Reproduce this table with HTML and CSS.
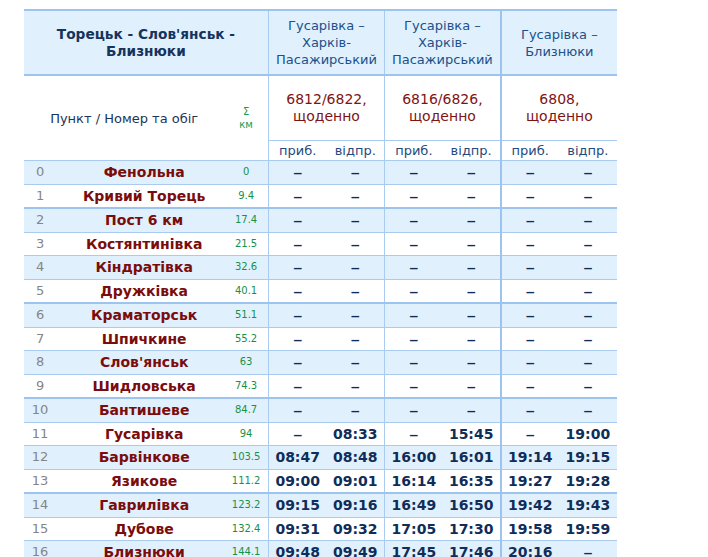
FILE: index.html
```html
<!DOCTYPE html>
<html lang="uk">
<head>
<meta charset="utf-8">
<title>Торецьк - Слов'янськ - Близнюки</title>
<link rel="stylesheet" href="styles.css">
</head>
<body>
<div class="page">
<table class="schedule">
<colgroup>
<col class="c-num"><col class="c-name"><col class="c-km">
<col class="c-t"><col class="c-t"><col class="c-t"><col class="c-t"><col class="c-t"><col class="c-t">
</colgroup>
<thead>
<tr class="h-route">
<th colspan="3" class="route-title">Торецьк - Слов'янськ -<br>Близнюки</th>
<th colspan="2" class="train-route gl">Гусарівка –<br>Харків-<br>Пасажирський</th>
<th colspan="2" class="train-route gl">Гусарівка –<br>Харків-<br>Пасажирський</th>
<th colspan="2" class="train-route gl2">Гусарівка –<br>Близнюки</th>
</tr>
<tr class="h-num">
<th colspan="2" rowspan="2" class="point">Пункт / Номер та обіг</th>
<th rowspan="2" class="sum-km">Σ<br>км</th>
<th colspan="2" class="train-num gl">6812/6822,<br>щоденно</th>
<th colspan="2" class="train-num gl">6816/6826,<br>щоденно</th>
<th colspan="2" class="train-num gl2">6808,<br>щоденно</th>
</tr>
<tr class="h-arr">
<th class="gl">приб.</th><th>відпр.</th>
<th class="gl">приб.</th><th>відпр.</th>
<th class="gl2">приб.</th><th>відпр.</th>
</tr>
</thead>
<tbody>
<tr class="even"><td class="num">0</td><td class="st">Фенольна</td><td class="km">0</td><td class="gl d">–</td><td class="d">–</td><td class="gl d">–</td><td class="d">–</td><td class="gl2 d">–</td><td class="d">–</td></tr>
<tr class="odd grp"><td class="num">1</td><td class="st">Кривий Торець</td><td class="km">9.4</td><td class="gl d">–</td><td class="d">–</td><td class="gl d">–</td><td class="d">–</td><td class="gl2 d">–</td><td class="d">–</td></tr>
<tr class="even"><td class="num">2</td><td class="st">Пост 6 км</td><td class="km">17.4</td><td class="gl d">–</td><td class="d">–</td><td class="gl d">–</td><td class="d">–</td><td class="gl2 d">–</td><td class="d">–</td></tr>
<tr class="odd"><td class="num">3</td><td class="st">Костянтинівка</td><td class="km">21.5</td><td class="gl d">–</td><td class="d">–</td><td class="gl d">–</td><td class="d">–</td><td class="gl2 d">–</td><td class="d">–</td></tr>
<tr class="even"><td class="num">4</td><td class="st">Кіндратівка</td><td class="km">32.6</td><td class="gl d">–</td><td class="d">–</td><td class="gl d">–</td><td class="d">–</td><td class="gl2 d">–</td><td class="d">–</td></tr>
<tr class="odd grp"><td class="num">5</td><td class="st">Дружківка</td><td class="km">40.1</td><td class="gl d">–</td><td class="d">–</td><td class="gl d">–</td><td class="d">–</td><td class="gl2 d">–</td><td class="d">–</td></tr>
<tr class="even"><td class="num">6</td><td class="st">Краматорськ</td><td class="km">51.1</td><td class="gl d">–</td><td class="d">–</td><td class="gl d">–</td><td class="d">–</td><td class="gl2 d">–</td><td class="d">–</td></tr>
<tr class="odd"><td class="num">7</td><td class="st">Шпичкине</td><td class="km">55.2</td><td class="gl d">–</td><td class="d">–</td><td class="gl d">–</td><td class="d">–</td><td class="gl2 d">–</td><td class="d">–</td></tr>
<tr class="even"><td class="num">8</td><td class="st">Слов'янськ</td><td class="km">63</td><td class="gl d">–</td><td class="d">–</td><td class="gl d">–</td><td class="d">–</td><td class="gl2 d">–</td><td class="d">–</td></tr>
<tr class="odd grp"><td class="num">9</td><td class="st">Шидловська</td><td class="km">74.3</td><td class="gl d">–</td><td class="d">–</td><td class="gl d">–</td><td class="d">–</td><td class="gl2 d">–</td><td class="d">–</td></tr>
<tr class="even"><td class="num">10</td><td class="st">Бантишеве</td><td class="km">84.7</td><td class="gl d">–</td><td class="d">–</td><td class="gl d">–</td><td class="d">–</td><td class="gl2 d">–</td><td class="d">–</td></tr>
<tr class="odd"><td class="num">11</td><td class="st">Гусарівка</td><td class="km">94</td><td class="gl d">–</td><td class="t">08:33</td><td class="gl d">–</td><td class="t">15:45</td><td class="gl2 d">–</td><td class="t">19:00</td></tr>
<tr class="even"><td class="num">12</td><td class="st">Барвінкове</td><td class="km">103.5</td><td class="gl t">08:47</td><td class="t">08:48</td><td class="gl t">16:00</td><td class="t">16:01</td><td class="gl2 t">19:14</td><td class="t">19:15</td></tr>
<tr class="odd grp"><td class="num">13</td><td class="st">Язикове</td><td class="km">111.2</td><td class="gl t">09:00</td><td class="t">09:01</td><td class="gl t">16:14</td><td class="t">16:35</td><td class="gl2 t">19:27</td><td class="t">19:28</td></tr>
<tr class="even"><td class="num">14</td><td class="st">Гаврилівка</td><td class="km">123.2</td><td class="gl t">09:15</td><td class="t">09:16</td><td class="gl t">16:49</td><td class="t">16:50</td><td class="gl2 t">19:42</td><td class="t">19:43</td></tr>
<tr class="odd"><td class="num">15</td><td class="st">Дубове</td><td class="km">132.4</td><td class="gl t">09:31</td><td class="t">09:32</td><td class="gl t">17:05</td><td class="t">17:30</td><td class="gl2 t">19:58</td><td class="t">19:59</td></tr>
<tr class="even"><td class="num">16</td><td class="st">Близнюки</td><td class="km">144.1</td><td class="gl t">09:48</td><td class="t">09:49</td><td class="gl t">17:45</td><td class="t">17:46</td><td class="gl2 t">20:16</td><td class="d">–</td></tr>
</tbody>
</table>
</div>
</body>
</html>
```

FILE: styles.css
```css
html, body {
  margin: 0;
  padding: 0;
  background: #ffffff;
}

.page {
  padding: 9px 0 0 24px;
  font-family: "DejaVu Sans", Verdana, sans-serif;
  font-size: 13px;
}

.schedule {
  border-collapse: collapse;
  table-layout: fixed;
  width: 593px;
  border-top: 2px solid #9cc4ee;
}

.c-num { width: 32px; }
.c-name { width: 168px; }
.c-km { width: 44px; }
.c-t { width: 58px; }

.schedule th,
.schedule td {
  padding: 0;
  text-align: center;
  vertical-align: middle;
  border-bottom: 1px solid #a9cbef;
}

.gl { border-left: 1px solid #a9cbef; }
.gl2 { border-left: 2px solid #9cc4ee; }

/* header */
.h-route th {
  background: #e1f0fd;
  height: 63px;
  line-height: 17px;
  border-bottom: 2px solid #9cc4ee;
}

.route-title {
  font-weight: bold;
  font-size: 13.7px;
  color: #14345c;
}

.train-route {
  font-weight: normal;
  color: #20508a;
}

.h-num th {
  height: 64px;
  font-weight: normal;
  line-height: 17px;
}

.point {
  color: #1a3558;
  font-size: 13px;
}

.sum-km {
  color: #1d9a4e;
  font-size: 10px;
  line-height: 13px !important;
  padding-top: 2px;
}

.train-num {
  color: #7d1414;
  font-size: 14px;
}

.h-arr th {
  height: 19px;
  font-weight: normal;
  color: #1f4a80;
  line-height: 16px;
}

/* data rows */
tbody td {
  height: 22.5px;
  line-height: 16px;
  color: #0f2d59;
}

tbody tr.even td { background: #e1f0fd; }
tbody tr.odd td { background: #ffffff; }
tbody tr.grp td { border-bottom: 2px solid #9cc4ee; }

.num {
  color: #858585;
  font-size: 13px;
}

.st {
  color: #7a0c0c;
  font-weight: bold;
  font-size: 14px;
  padding-left: 8px !important;
}

.km {
  color: #17904a;
  font-size: 10px;
}

.t {
  font-weight: bold;
  font-size: 14px;
  color: #0f2d59;
}

.d {
  font-weight: normal;
  font-size: 19px;
  color: #0f2d59;
}
```
